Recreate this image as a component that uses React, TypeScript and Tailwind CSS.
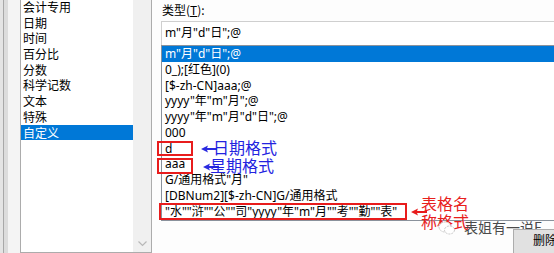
import React from 'react';

const FONT = '"Segoe UI", "Noto Sans", "Noto Sans CJK SC", sans-serif';
const CJK = '"Noto Sans CJK SC", sans-serif';

const categories = ['会计专用', '日期', '时间', '百分比', '分数', '科学记数', '文本', '特殊', '自定义'];

const formats = [
  'm"月"d"日";@',
  '0_);[红色](0)',
  '[$-zh-CN]aaa;@',
  'yyyy"年"m"月";@',
  'yyyy"年"m"月"d"日";@',
  '000',
  'd',
  'aaa',
  'G/通用格式"月"',
  '[DBNum2][$-zh-CN]G/通用格式',
  '"水""浒""公""司"yyyy"年"m"月""考""勤""表"',
];

const Arrow: React.FC<{ color: string; className: string }> = ({ color, className }) => (
  <svg className={className} width="16" height="8" viewBox="0 0 16 8">
    <path d="M0 4 L7 0.5 L6 3 L16 3 L16 5 L6 5 L7 7.5 Z" fill={color} />
  </svg>
);

const App: React.FC = () => {
  return (
    <div
      className="relative w-[554px] h-[253px] overflow-hidden bg-[#fdfdfd] flex text-black"
      style={{ fontFamily: FONT }}
    >
      {/* left edge of the dialog */}
      <div className="flex h-full w-[20px] shrink-0">
        <div className="w-[3px] bg-[#e4e4e4]" />
        <div className="w-[1px] bg-[#a8a8a8]" />
        <div className="w-[4px] bg-[#dcdcdc]" />
        <div className="flex-1 bg-[#f4f4f4]" />
      </div>

      {/* category list */}
      <div className="flex h-[253px] w-[132px] shrink-0 border-x border-b border-[#acacac] bg-white">
        <div className="flex-1 pt-[-1px]">
          <div className="-mt-[1px]">
            {categories.map((c) => (
              <div
                key={c}
                className={`h-[15.7px] pl-[2px] text-[12px] leading-[15.7px] ${
                  c === '自定义' ? 'bg-[#0078d7] text-white' : ''
                }`}
                style={{ fontFamily: CJK }}
              >
                {c}
              </div>
            ))}
          </div>
        </div>
        <div className="flex w-[18px] flex-col justify-end items-center bg-[#f0f0f0] pb-[5px]">
          <svg width="9" height="6" viewBox="0 0 9 6">
            <path d="M0.5 0.5 L4.5 4.5 L8.5 0.5" stroke="#b8b8b8" strokeWidth="1.2" fill="none" />
          </svg>
        </div>
      </div>

      {/* type area */}
      <div className="ml-[9px] flex flex-1 flex-col">
        <div className="h-[21px] pl-[1px] pt-[2px] text-[12px] leading-[16px]" style={{ fontFamily: CJK }}>
          类型(<span className="underline">T</span>):
        </div>
        <div className="h-[24px] border-t border-l border-[#cfcfcf] bg-white pl-[3px] text-[12px] leading-[22px]">
          m"月"d"日";@
        </div>
        <div className="h-[176px] border-l border-t border-b border-[#8a929c] bg-white">
          {formats.map((f, i) => (
            <div
              key={f}
              className={`h-[15.75px] pl-[3px] text-[12px] leading-[15.75px] whitespace-nowrap ${
                i === 0 ? 'bg-[#0078d7] text-white' : ''
              }`}
            >
              {f}
            </div>
          ))}
        </div>
      </div>

      {/* annotations */}
      <div className="absolute left-[157px] top-[141px] h-[15px] w-[36px] border-2 border-[#e81c1c]" />
      <div className="absolute left-[157px] top-[158px] h-[16px] w-[36px] border-2 border-[#e81c1c]" />
      <div className="absolute left-[159px] top-[203px] h-[17px] w-[248px] border-2 border-[#e81c1c]" />

      <Arrow color="#2a2ae0" className="absolute left-[201px] top-[145px]" />
      <div className="absolute left-[213px] top-[137px] text-[16px] leading-[20px] text-[#2323df]" style={{ fontFamily: CJK }}>
        日期格式
      </div>
      <Arrow color="#2a2ae0" className="absolute left-[203px] top-[163px]" />
      <div className="absolute left-[210px] top-[155px] text-[16px] leading-[20px] text-[#2323df]" style={{ fontFamily: CJK }}>
        星期格式
      </div>

      <Arrow color="#e81c1c" className="absolute left-[411px] top-[208px]" />
      <div className="absolute left-[421px] top-[194px] text-[16px] leading-[18px] text-[#e8201c]" style={{ fontFamily: CJK }}>
        表格名
        <br />
        称格式
      </div>

      {/* watermark */}
      <svg className="absolute left-[438px] top-[220px]" width="18" height="16" viewBox="0 0 18 16">
        <ellipse cx="7" cy="7" rx="6" ry="5" fill="white" stroke="#c8c8c8" strokeWidth="1" strokeDasharray="2 1" />
        <ellipse cx="11.5" cy="10" rx="5" ry="4" fill="white" stroke="#c8c8c8" strokeWidth="1" strokeDasharray="2 1" />
      </svg>
      <div className="absolute left-[464px] top-[219px] text-[14px] leading-[16px] text-[#4a4a4a]" style={{ fontFamily: CJK }}>
        表姐有一说E
      </div>

      {/* button */}
      <div className="absolute left-[513px] top-[229px] h-[30px] w-[60px] border border-[#adadad] bg-[#e1e1e1] pl-[19px] pt-[2px] text-[12px] leading-[16px]" style={{ fontFamily: CJK }}>
        删除
      </div>
    </div>
  );
};

export default App;
